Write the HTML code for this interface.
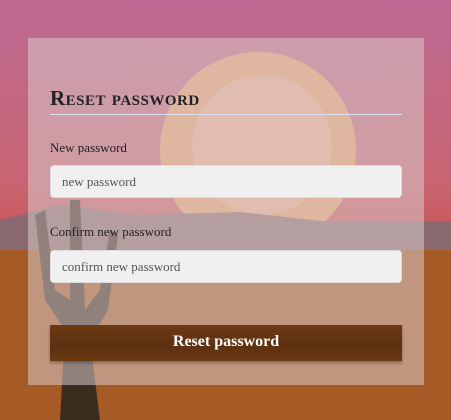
<!DOCTYPE html>
<html><head><style>
html,body{margin:0;padding:0;width:451px;height:420px;overflow:hidden;font-family:"Liberation Serif",serif;}
.bg{position:absolute;left:0;top:0}
.panel{position:absolute;left:28px;top:38px;width:396px;height:347px;background:rgba(215,200,200,0.55);}
h1{position:absolute;left:22px;top:48px;margin:0;font-size:21px;font-variant:small-caps;font-weight:bold;color:#222;letter-spacing:0.5px;}
.hr{position:absolute;left:22px;top:76px;width:352px;height:1px;background:#dde;}
.lbl{position:absolute;left:22px;font-size:13px;color:#222;}
.inp{position:absolute;left:22px;width:350px;height:33px;background:#f0f0f0;border:1px solid #ddd;border-radius:4px;box-sizing:border-box;width:352px;font-size:13px;color:#555;padding-left:11px;line-height:32px;}
.btn{position:absolute;left:22px;top:287px;width:352px;height:36px;background:linear-gradient(#6a3a12,#5e3010 60%,#6a3a12);color:#fff;font-weight:bold;font-size:16px;text-align:center;line-height:34px;box-shadow:0 2px 3px rgba(0,0,0,.3);}
</style></head><body>
<svg class="bg" width="451" height="420" viewBox="0 0 451 420">
<defs><linearGradient id="sky" x1="0" y1="0" x2="0" y2="1">
<stop offset="0" stop-color="#bd6a94"/><stop offset="0.45" stop-color="#c96470"/><stop offset="0.65" stop-color="#c84848"/></linearGradient></defs>
<rect width="451" height="420" fill="url(#sky)"/>
<circle cx="258" cy="150" r="98" fill="#e8a070"/>
<circle cx="262" cy="145" r="70" fill="#eab090"/>
<path d="M0 220 L60 205 L140 215 L240 212 L330 222 L451 222 L451 260 L0 260Z" fill="#8a6a70"/>
<path d="M380 260 L451 250 L451 290 Z" fill="#5a3030"/>
<rect x="0" y="250" width="451" height="170" fill="#a65a25"/>
<path d="M60 420 L65 330 L45 300 L35 215 L45 210 L55 290 L70 300 L70 200 L80 200 L85 310 L100 290 L110 230 L118 235 L108 310 L90 340 L100 420Z" fill="#3b2c20"/>
</svg>
<div class="panel">
<h1>Reset password</h1>
<div class="hr"></div>
<div class="lbl" style="top:102px">New password</div>
<div class="inp" style="top:127px">new password</div>
<div class="lbl" style="top:186px">Confirm new password</div>
<div class="inp" style="top:212px">confirm new password</div>
<div class="btn">Reset password</div>
</div>
</body></html>
